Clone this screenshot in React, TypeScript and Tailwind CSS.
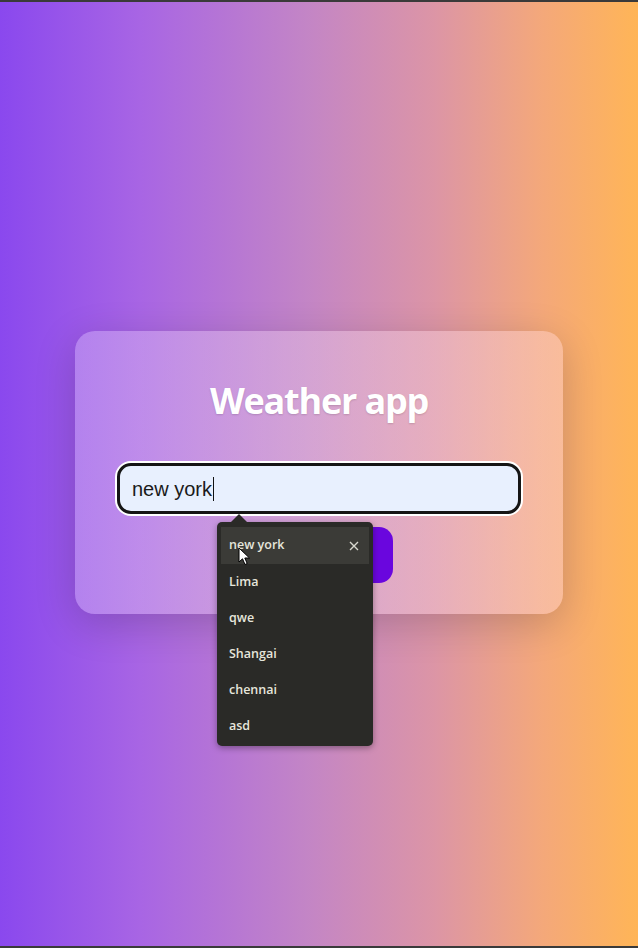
import React from "react";

const items = ["new york", "Lima", "qwe", "Shangai", "chennai", "asd"];

export default function App() {
  return (
    <div className="w-[638px] h-[948px] border-t-2 border-b-2 border-[#3a3a3a] bg-[linear-gradient(to_right,#8a48ee_0%,#a865e4_22%,#c385c6_48%,#dc95a6_68%,#f4a87a_85%,#ffb557_100%)] flex items-center justify-center">
      <div className="w-[488px] h-[283px] mt-[-3px] rounded-[20px] bg-[linear-gradient(to_right,rgba(255,255,255,0.25),rgba(255,225,240,0.32))] shadow-[0_10px_40px_rgba(0,0,0,0.18)] flex flex-col items-center pt-[46px] px-[42px]">
        <h1 className="text-[36px] leading-[48px] font-bold text-white [font-family:'Open_Sans',sans-serif] tracking-[-1.2px] [text-shadow:0_1px_2px_rgba(0,0,0,0.15)]">
          Weather app
        </h1>
        <div className="relative mt-[38px] w-[404px]">
          <div className="h-[51px] w-full rounded-[14px] border-[3px] border-[#151515] bg-[#e8f0fe] shadow-[0_0_0_2px_#ffffff] flex items-center pl-[12px] [font-family:'Liberation_Sans',Arial,sans-serif] text-[20px] text-[#1a1a1a]">
            <span>new york</span>
            <span className="w-[1px] h-[24px] bg-[#111] ml-[1px]" />
          </div>
          <div className="h-[13px]" />
          <div className="mx-auto w-[148px] h-[56px] rounded-[14px] bg-[#6a06de]" />

          <div className="absolute left-[100px] top-[59px] w-[156px] h-[224px] rounded-[5px] bg-[#2a2a27] shadow-[0_2px_6px_rgba(0,0,0,0.35)] pt-[5px] px-[4px] [font-family:'Open_Sans',sans-serif]">
            <div className="absolute left-[14px] top-[-8px] w-0 h-0 border-l-[8px] border-r-[8px] border-b-[8px] border-l-transparent border-r-transparent border-b-[#2a2a27]" />
            {items.map((it, i) => (
              <div
                key={it}
                className={
                  i === 0
                    ? "h-[37px] flex items-center justify-between pl-[8px] pr-[10px] bg-[#3b3b37] text-[12.5px] font-semibold text-[#e6e6dc]"
                    : "h-[36px] flex items-center pl-[8px] text-[12.5px] font-semibold text-[#e6e6dc]"
                }
              >
                <span>{it}</span>
                {i === 0 && (
                  <svg width="10" height="10" viewBox="0 0 10 10" className="text-[#d8d8d0]">
                    <path d="M1 1L9 9M9 1L1 9" stroke="currentColor" strokeWidth="1.4" />
                  </svg>
                )}
              </div>
            ))}
            <svg className="absolute left-[21px] top-[25px]" width="13" height="19" viewBox="0 0 13 19">
              <path d="M1 1 L1 15 L4.5 11.8 L7 17.5 L9.2 16.5 L6.8 11 L11.5 11 Z" fill="#ffffff" stroke="#000" strokeWidth="1" strokeLinejoin="round" />
            </svg>
          </div>
        </div>
      </div>
    </div>
  );
}
